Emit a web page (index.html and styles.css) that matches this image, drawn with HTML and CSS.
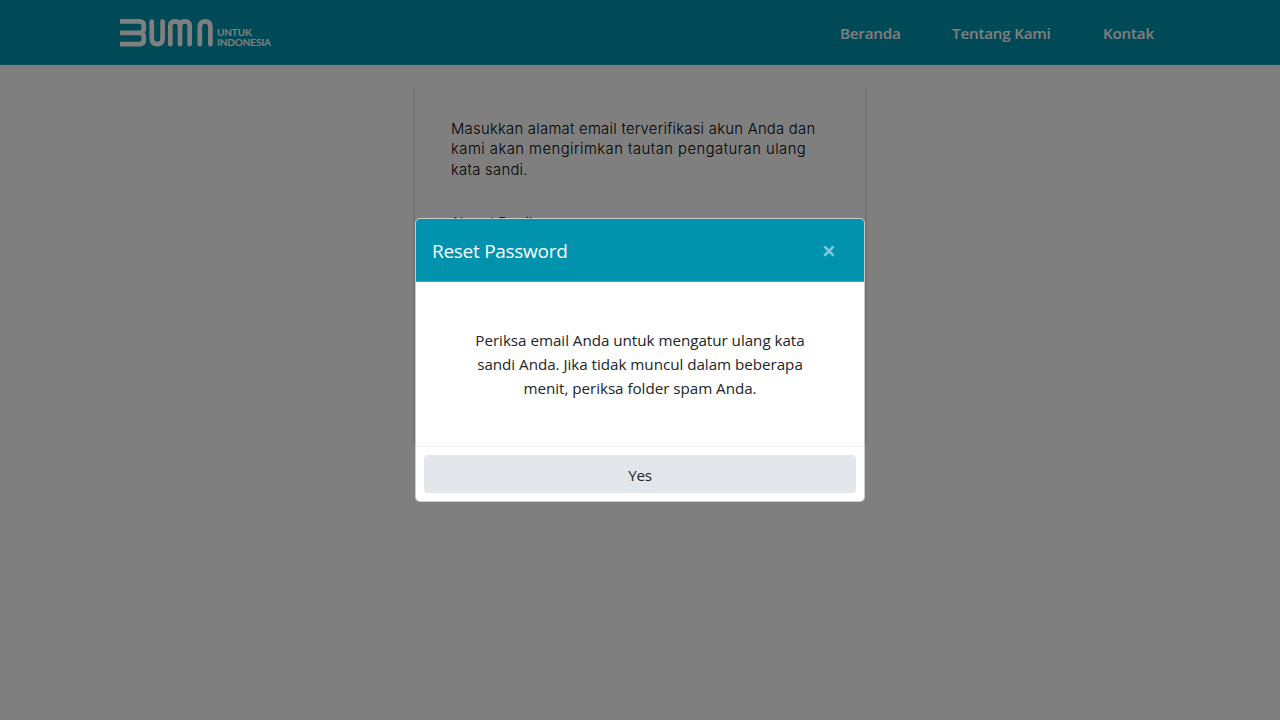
FILE: index.html
```html
<!DOCTYPE html>
<html lang="id">
<head>
<meta charset="utf-8">
<title>Reset Password</title>
<link rel="stylesheet" href="styles.css">
</head>
<body>
<header class="navbar">
  <div class="brand">
    <svg class="brand-mark" width="94" height="30" viewBox="0 0 94 30" fill="none" stroke="#fff" stroke-width="4.7" aria-label="BUMN">
      <path d="M0 3.4H19.5Q23.8 3.4 23.8 7.8V10.5Q23.8 14.8 19.5 14.8H0M19.5 14.8Q23.8 14.8 23.8 19V21.8Q23.8 26.1 19.5 26.1H0"/>
      <path stroke-linecap="round" d="M31.8 3.5V20.5Q31.8 26.1 37.2 26.1Q42.6 26.1 42.6 20.5V3.5"/>
      <path stroke-linecap="round" d="M50.3 26.2V8Q50.3 3.4 55.1 3.4Q60 3.4 60 8V26.2M60 8Q60 3.4 64.9 3.4Q69.7 3.4 69.7 8V26.2"/>
      <path stroke-linecap="round" d="M79.8 26.2V9Q79.8 3.4 85.1 3.4Q90.4 3.4 90.4 9V26.2"/>
    </svg>
    <div class="tagline"><span>UNTUK</span><span>INDONESIA</span></div>
  </div>
  <nav class="links">
    <a class="link-home">Beranda</a>
    <a class="link-about">Tentang Kami</a>
    <a class="link-contact">Kontak</a>
  </nav>
</header>
<main class="card">
  <p class="intro">Masukkan alamat email terverifikasi akun Anda dan<br><span class="intro-wide">kami akan mengirimkan tautan pengaturan ulang</span><br>kata sandi.</p>
  <label class="field-label">Alamat Email</label>
</main>
<div class="overlay">
  <section class="modal" role="dialog">
    <div class="modal-header">
      <h1 class="modal-title">Reset Password</h1>
      <svg class="close" width="12" height="12" viewBox="0 0 12 12" stroke="#fff" stroke-width="2.7"><path d="M1.4 1.4L10.6 10.6M10.6 1.4L1.4 10.6"/></svg>
    </div>
    <div class="modal-body">
      <p class="message">Periksa email Anda untuk mengatur ulang kata<br>sandi Anda. Jika tidak muncul dalam beberapa<br>menit, periksa folder spam Anda.</p>
    </div>
    <div class="modal-footer"><button class="confirm">Yes</button></div>
  </section>
</div>
</body>
</html>
```
FILE: styles.css
```css
* { box-sizing: border-box; }
body {
  margin: 0;
  height: 720px;
  overflow: hidden;
  background: #fff;
  color: #212529;
  font-family: "Open Sans", "Noto Sans", sans-serif;
  font-size: 15.2px;
}
p, h1 { margin: 0; white-space: nowrap; font-weight: 400; }
.navbar {
  height: 65px;
  padding: 0 126px 0 120px;
  display: flex;
  justify-content: space-between;
  background: #0193ad;
  border-bottom: 1px solid #2a9fb5;
  color: #fff;
}
.brand { display: flex; padding-top: 18px; }
.brand-mark { display: block; }
.tagline {
  display: flex;
  flex-direction: column;
  padding: 9px 0 0 3px;
  font: 700 10px/10px Lato, sans-serif;
  letter-spacing: -.15px;
}
.links {
  display: flex;
  gap: 52px;
  padding-top: 21px;
  font-weight: 600;
  line-height: 24px;
  letter-spacing: -.2px;
}
.links a { white-space: nowrap; }
.link-home { width: 60px; }
.link-about { width: 99px; }
.link-contact { width: 51px; }
.card {
  width: 450px;
  height: 356px;
  margin: 20px auto 0;
  padding: 34px 36px;
  box-shadow: 0 3px 4px -1px rgba(0, 0, 0, .25), 0 2px 3px rgba(0, 0, 0, .15);
  clip-path: inset(1px -8px -8px);
  color: #000;
  font-family: Inter, sans-serif;
  font-weight: 300;
}
.intro { font-size: 14.8px; font-weight: 300; line-height: 20.4px; letter-spacing: .27px; }
.intro-wide { letter-spacing: .47px; }
.field-label { display: block; margin-top: 33px; font-size: 13px; line-height: 18px; letter-spacing: .35px; }
.overlay {
  position: absolute;
  inset: 0;
  display: flex;
  align-items: center;
  justify-content: center;
  background: rgba(0, 0, 0, .5);
}
.modal {
  width: 450px;
  height: 284px;
  display: flex;
  flex-direction: column;
  background: #fff;
  background-clip: padding-box;
  border: 1px solid rgba(255, 255, 255, .6);
  border-radius: 5px;
  overflow: hidden;
}
.modal-header {
  height: 63px;
  padding: 1px 29px 0 16px;
  display: flex;
  align-items: center;
  justify-content: space-between;
  background: #0193ad;
  border-bottom: 1px solid #36a9be;
  color: #fff;
}
.modal-title { padding-top: 2px; font-size: 19px; line-height: 31px; letter-spacing: -.28px; }
.close { opacity: .5; }
.modal-body { height: 164px; padding-top: 46px; text-align: center; }
.message { line-height: 24px; letter-spacing: -.03px; }
.modal-footer { flex: 1; padding: 8px; border-top: 1px solid #f0f2f3; }
.confirm {
  display: block;
  width: 100%;
  height: 38px;
  padding: 1px 0 0;
  border: 0;
  border-radius: 4px;
  background: #e3e6eb;
  color: #212529;
  font: inherit;
  letter-spacing: -.3px;
}
```
